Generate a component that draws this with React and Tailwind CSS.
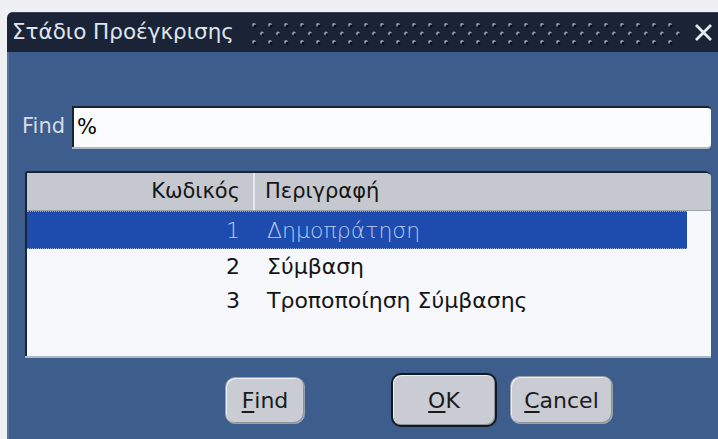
import React from 'react';

const rows = [
    { code: '1', text: 'Δημοπράτηση', selected: true },
    { code: '2', text: 'Σύμβαση' },
    { code: '3', text: 'Τροποποίηση Σύμβασης' },
];

const font = { fontFamily: '"DejaVu Sans", "Liberation Sans", sans-serif' };

// embossed dot texture in the title bar
function Grip() {
    return (
        <svg className="h-[27px] flex-1" preserveAspectRatio="none">
            <defs>
                <pattern id="grip" width="16" height="17" patternUnits="userSpaceOnUse">
                    <circle cx="4" cy="6" r="1.9" fill="#929db2" />
                    <circle cx="5" cy="7.2" r="1.4" fill="#050a13" />
                    <circle cx="12" cy="14.5" r="1.9" fill="#929db2" />
                    <circle cx="13" cy="15.7" r="1.4" fill="#050a13" />
                </pattern>
            </defs>
            <rect width="100%" height="100%" fill="url(#grip)" />
        </svg>
    );
}

function Button({ children, primary, className }) {
    return (
        <button
            className={`flex items-center justify-center rounded-[10px] bg-[#c9ccd2] text-[22px] text-[#1b1b1b] shadow-[inset_1px_1px_0_#eef0f3,inset_-1px_-1px_0_#8d929a] ${primary ? 'border-2 border-[#141820]' : 'border border-[#9aa0a8]'} ${className}`}
            style={font}
        >
            {children}
        </button>
    );
}

export default function App() {
    return (
        <div className="w-[718px] h-[439px] bg-[#eef0f2] pt-[12px] pl-[7px] overflow-hidden" style={font}>
            <div className="flex flex-col h-[427px] rounded-tl-[6px] overflow-hidden">
                {/* title bar */}
                <div className="flex items-center h-[40px] bg-[#1b2436] border-t border-[#3b475e] pl-[5px] pr-[3px]">
                    <span className="text-[21.5px] text-[#dfe4ee] whitespace-nowrap">Στάδιο Προέγκρισης</span>
                    <div className="flex-1 flex ml-[16px] mr-[14px]">
                        <Grip />
                    </div>
                    <svg width="19" height="19" viewBox="0 0 19 19" className="mr-[2px]">
                        <path d="M2 2 L17 17 M17 2 L2 17" stroke="#e6eaf2" strokeWidth="2.8" />
                    </svg>
                </div>

                {/* body */}
                <div className="flex-1 flex flex-col bg-[#3d5d8c] pr-[7px] border-l-2 border-[#5574a1]">
                    <div className="flex items-center mt-[54px] ml-[13px]">
                        <span className="w-[50px] text-[21px] text-[#d6dce6]">Find</span>
                        <div className="flex-1 h-[41px] flex items-center bg-[#fbfcfd] rounded-r-[4px] border-t-2 border-l-2 border-[#1a2232] shadow-[0_2px_0_#aeb7c6] pl-[3px] text-[21px] text-black">
                            %
                        </div>
                    </div>

                    {/* list */}
                    <div className="mt-[24px] ml-[16px] h-[185px] flex flex-col bg-[#f6f8fb] rounded-tr-[6px] rounded-tl-[3px] border-t-2 border-l-2 border-[#1c2435] overflow-hidden shadow-[0_2px_0_#b0b8c6]">
                        <div className="flex h-[38px] bg-[#c5c8ce] text-[21px] text-[#151515] border-b border-[#9ea3ab]">
                            <div className="w-[228px] flex items-center justify-end pr-[13px] border-r-2 border-[#e5e7ea]">Κωδικός</div>
                            <div className="flex items-center pl-[10px]">Περιγραφή</div>
                        </div>
                        <div className="flex-1 pr-[24px]">
                            {rows.map((r) => (
                                <div
                                    key={r.code}
                                    className={`flex text-[22px] ${r.selected ? 'h-[38px] bg-[#1d4cae] text-[#bccbf0] border-y border-dotted border-[#8aa4dc] font-light' : 'h-[34px] text-[#151515]'}`}
                                >
                                    <div className="w-[228px] flex items-center justify-end pr-[15px]">{r.code}</div>
                                    <div className="flex items-center pl-[12px]">{r.text}</div>
                                </div>
                            ))}
                        </div>
                    </div>

                    {/* actions */}
                    <div className="flex items-center mt-[17px] h-[54px]">
                        <Button className="ml-[216px] w-[80px] h-[47px]">
                            <span className="underline underline-offset-[3px]">F</span>ind
                        </Button>
                        <Button primary className="ml-[86px] w-[106px] h-[54px]">
                            <span className="underline underline-offset-[3px]">O</span>K
                        </Button>
                        <Button className="ml-[13px] w-[103px] h-[48px]">
                            <span className="underline underline-offset-[3px]">C</span>ancel
                        </Button>
                    </div>
                </div>
            </div>
        </div>
    );
}
